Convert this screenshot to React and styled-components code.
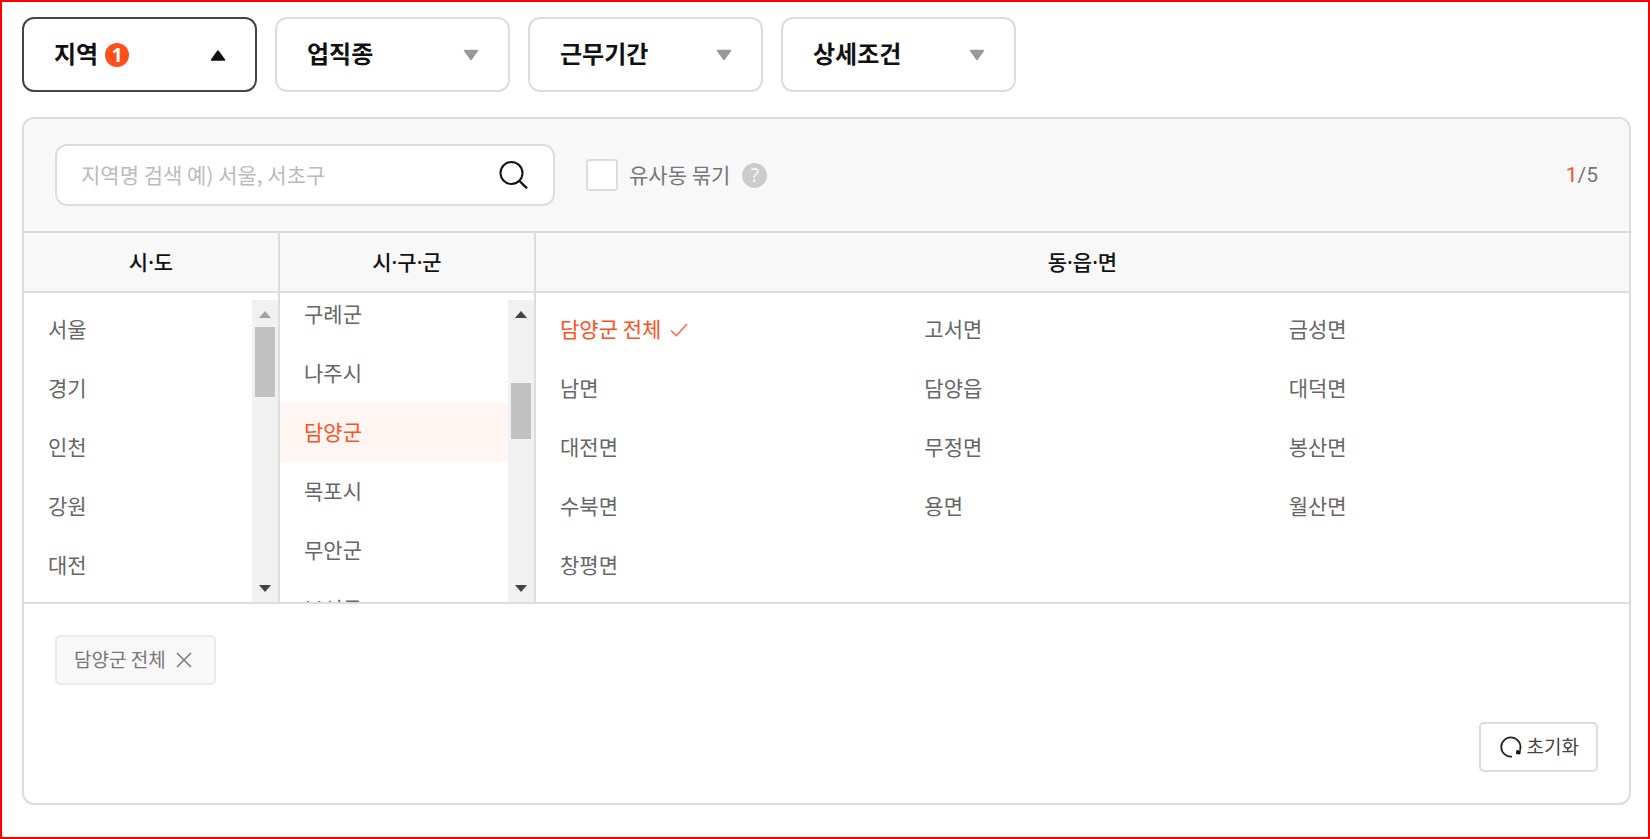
import React, { useState } from "react";
import styled, { createGlobalStyle, css } from "styled-components";

const filters = [
  { name: "지역", count: 1 },
  { name: "업직종" },
  { name: "근무기간" },
  { name: "상세조건" },
];

const cities = ["서울", "경기", "인천", "강원", "대전"];
const districts = ["구례군", "나주시", "담양군", "목포시", "무안군", "보성군"];
const towns = [
  "담양군 전체",
  "고서면",
  "금성면",
  "남면",
  "담양읍",
  "대덕면",
  "대전면",
  "무정면",
  "봉산면",
  "수북면",
  "용면",
  "월산면",
  "창평면",
];

const Caret = ({ up }) => (
  <svg width="16" height="12" viewBox="0 0 16 12" aria-hidden="true">
    <path
      d={up ? "M8 2 14.5 11H1.5Z" : "M8 10.5 1.5 1.5H14.5Z"}
      fill={up ? "#111" : "#999"}
      stroke={up ? "#111" : "#999"}
      strokeWidth="1.5"
      strokeLinejoin="round"
    />
  </svg>
);

const SearchIcon = () => (
  <svg width="29" height="29" viewBox="0 0 29 29" fill="none" aria-hidden="true">
    <circle cx="12.5" cy="12" r="11" stroke="#111" strokeWidth="2" />
    <path d="M20.5 20 28 27.3" stroke="#111" strokeWidth="2.4" />
  </svg>
);

const CheckIcon = () => (
  <svg width="18" height="14" viewBox="0 0 18 14" fill="none" aria-hidden="true">
    <path d="M1 7.5 6.5 12.5 17 1" stroke="#ff6a4d" strokeWidth="1.6" />
  </svg>
);

const CloseIcon = () => (
  <svg width="16" height="16" viewBox="0 0 16 16" aria-hidden="true">
    <path d="M1 1 15 15M15 1 1 15" stroke="#777" strokeWidth="1.5" />
  </svg>
);

const ResetIcon = () => (
  <svg width="22" height="22" viewBox="0 0 22 22" fill="none" aria-hidden="true">
    <path d="M12 20.6A9.6 9.6 0 1 1 20 14" stroke="#222" strokeWidth="1.8" />
    <path d="M16.4 14 21 14.6 20.2 18.6 16 18Z" fill="#111" />
  </svg>
);

const ScrollBar = ({ before, size, atTop }) => (
  <Track aria-hidden="true">
    <svg width="12" height="7" viewBox="0 0 12 7">
      <path d="M6 0 12 7H0Z" fill={atTop ? "#a3a3a3" : "#444"} />
    </svg>
    <Rail>
      <Thumb style={{ top: before, height: size }} />
    </Rail>
    <svg width="12" height="7" viewBox="0 0 12 7">
      <path d="M6 7 0 0H12Z" fill="#444" />
    </svg>
  </Track>
);

const App = () => {
  const [filter, setFilter] = useState("지역");
  const [city, setCity] = useState(null);
  const [district, setDistrict] = useState("담양군");
  const [selected, setSelected] = useState(["담양군 전체"]);

  const toggleTown = (town) => {
    if (selected.includes(town)) {
      setSelected(selected.filter((item) => item !== town));
    } else if (selected.length < 5) {
      setSelected([...selected, town]);
    }
  };

  return (
    <>
      <GlobalStyle />
      <Wrapper>
        <Filters>
          {filters.map(({ name, count }) => (
            <FilterButton
              key={name}
              type="button"
              $active={filter === name}
              onClick={() => setFilter(name)}
            >
              <FilterName>{name}</FilterName>
              {count && <Badge>{count}</Badge>}
              <Caret up={filter === name} />
            </FilterButton>
          ))}
        </Filters>

        <Panel>
          <Toolbar>
            <SearchBox>
              <input
                type="text"
                aria-label="지역명 검색"
                placeholder="지역명 검색 예) 서울, 서초구"
              />
              <button type="button" aria-label="검색">
                <SearchIcon />
              </button>
            </SearchBox>
            <CheckLabel>
              <input type="checkbox" />
              <span>유사동 묶기</span>
            </CheckLabel>
            <Help type="button">?</Help>
            <Counter>
              <em>{selected.length}</em>/5
            </Counter>
          </Toolbar>

          <Columns>
            <Column>
              <ColumnTitle>시·도</ColumnTitle>
              <ScrollArea>
                <List>
                  {cities.map((item) => (
                    <li key={item}>
                      <Item
                        type="button"
                        $active={city === item}
                        onClick={() => setCity(item)}
                      >
                        {item}
                      </Item>
                    </li>
                  ))}
                </List>
                <ScrollBar before={1} size={70} atTop />
              </ScrollArea>
            </Column>

            <Column>
              <ColumnTitle>시·구·군</ColumnTitle>
              <ScrollArea>
                <List $scrolled={15}>
                  {districts.map((item) => (
                    <li key={item}>
                      <Item
                        type="button"
                        $active={district === item}
                        $filled
                        onClick={() => setDistrict(item)}
                      >
                        {item}
                      </Item>
                    </li>
                  ))}
                </List>
                <ScrollBar before={57} size={56} />
              </ScrollArea>
            </Column>

            <Column>
              <ColumnTitle>동·읍·면</ColumnTitle>
              <TownGrid>
                {towns.map((item) => (
                  <li key={item}>
                    <Item
                      type="button"
                      $active={selected.includes(item)}
                      onClick={() => toggleTown(item)}
                    >
                      {item}
                      {selected.includes(item) && <CheckIcon />}
                    </Item>
                  </li>
                ))}
              </TownGrid>
            </Column>
          </Columns>

          <Footer>
            <Chips>
              {selected.map((item) => (
                <Chip key={item} type="button" onClick={() => toggleTown(item)}>
                  <span>{item}</span>
                  <CloseIcon />
                </Chip>
              ))}
            </Chips>
            <ResetButton type="button" onClick={() => setSelected([])}>
              <ResetIcon />
              <span>초기화</span>
            </ResetButton>
          </Footer>
        </Panel>
      </Wrapper>
    </>
  );
};

//styles
const GlobalStyle = createGlobalStyle`
  * {
    box-sizing: border-box;
    margin: 0;
    padding: 0;
  }

  body {
    background-color: #fff;
    color: #111;
    font-family: "Noto Sans CJK KR", sans-serif;
    font-size: 21px;
  }

  button,
  input {
    font: inherit;
    color: inherit;
  }

  button {
    border: none;
    background: none;
    cursor: pointer;
  }

  ul {
    list-style: none;
  }

  svg {
    display: block;
    flex-shrink: 0;
  }
`;

const Wrapper = styled.div`
  min-height: 100vh;
  padding: 15px 17px 28px 20px;
  border: 2px solid #f00;
`;

const Filters = styled.div`
  display: flex;
  gap: 18px;
  margin-bottom: 25px;
`;

const FilterButton = styled.button`
  display: flex;
  align-items: center;
  width: 235px;
  height: 75px;
  padding: 0 29px 0 30px;
  border: 2px solid ${({ $active }) => ($active ? "#444" : "#ddd")};
  border-radius: 12px;
  background-color: #fff;

  > svg {
    margin-left: auto;
  }
`;

const FilterName = styled.span`
  padding-bottom: 4px;
  font-size: 24px;
  font-weight: 700;
  line-height: 30px;
`;

const Badge = styled.span`
  width: 24px;
  height: 24px;
  margin-left: 7px;
  border-radius: 50%;
  background-color: #ff501b;
  color: #fff;
  font-family: "Noto Sans", sans-serif;
  font-size: 19px;
  font-weight: 700;
  line-height: 24px;
  text-align: center;
`;

const Panel = styled.section`
  border: 2px solid #ddd;
  border-radius: 12px;
  overflow: hidden;
`;

const Toolbar = styled.div`
  display: flex;
  align-items: center;
  height: 112px;
  padding: 0 31px;
  background-color: #f8f8f8;
`;

const SearchBox = styled.div`
  display: flex;
  align-items: center;
  width: 500px;
  height: 62px;
  padding: 0 25px 0 24px;
  border: 2px solid #ddd;
  border-radius: 12px;
  background-color: #fff;

  input {
    flex: 1;
    min-width: 0;
    padding-bottom: 2px;
    border: none;
    outline: none;
    background: none;

    &::placeholder {
      color: #bbb;
      opacity: 1;
    }
  }
`;

const CheckLabel = styled.label`
  display: flex;
  align-items: center;
  gap: 11px;
  margin-left: 31px;
  color: #777;

  span {
    padding-bottom: 2px;
  }

  input {
    appearance: none;
    width: 32px;
    height: 32px;
    border: 2px solid #ddd;
    border-radius: 3px;
    background-color: #fff;

    &:checked {
      background-color: #ff501b;
    }
  }
`;

const Help = styled.button`
  width: 25px;
  height: 25px;
  margin-left: 12px;
  border-radius: 50%;
  background-color: #ccc;
  color: #f8f8f8;
  font-family: "Noto Sans", sans-serif;
  font-size: 19px;
  line-height: 25px;
`;

const Counter = styled.p`
  margin-left: auto;
  color: #777;
  font-family: Roboto, sans-serif;
  font-size: 21px;

  em {
    color: #ff501b;
    font-style: normal;
  }
`;

const Columns = styled.div`
  display: grid;
  grid-template-columns: 254px 256px 1fr;
  border-top: 2px solid #ddd;
  border-bottom: 2px solid #ddd;
`;

const Column = styled.div`
  min-width: 0;

  & + & {
    border-left: 2px solid #ddd;
  }
`;

/* Noto Sans comes first for its narrow middle dot */
const ColumnTitle = styled.h2`
  height: 60px;
  border-bottom: 2px solid #ddd;
  background-color: #f8f8f8;
  font-family: "Noto Sans", "Noto Sans CJK KR", sans-serif;
  font-size: 21px;
  font-weight: 500;
  line-height: 58px;
  text-align: center;
`;

const ScrollArea = styled.div`
  display: flex;
  height: 302px;
  margin-top: 7px;
  overflow: hidden;
`;

const List = styled.ul`
  flex: 1;
  margin-top: -${({ $scrolled }) => $scrolled || 0}px;
`;

const Item = styled.button`
  display: flex;
  align-items: center;
  gap: 9px;
  width: 100%;
  height: 59px;
  padding: 0 24px 3px;
  color: #666;
  line-height: 30px;
  text-align: left;

  svg {
    margin-top: 3px;
  }

  ${({ $active }) =>
    $active &&
    css`
      color: #ff501b;
    `}

  ${({ $active, $filled }) =>
    $active &&
    $filled &&
    css`
      background-color: #fff6f4;
    `}
`;

const Track = styled.div`
  display: flex;
  flex-direction: column;
  align-items: center;
  width: 26px;
  padding: 11px 0 10px;
  background-color: #f1f1f1;
`;

const Rail = styled.div`
  position: relative;
  flex: 1;
  width: 20px;
  margin: 8px 0;
`;

const Thumb = styled.div`
  position: absolute;
  width: 100%;
  background-color: #c1c1c1;
`;

const TownGrid = styled.ul`
  display: grid;
  grid-template-columns: repeat(3, 1fr);
  padding-top: 7px;
`;

const Footer = styled.div`
  display: flex;
  flex-direction: column;
  padding: 31px;
`;

const Chips = styled.div`
  display: flex;
  flex-wrap: wrap;
  gap: 10px;
  min-height: 50px;
`;

const Chip = styled.button`
  display: flex;
  align-items: center;
  gap: 10px;
  height: 50px;
  padding: 0 22px 0 17px;
  border: 2px solid #eaeaea;
  border-radius: 5px;
  background-color: #f8f8f8;
  color: #777;
  font-size: 19px;

  span {
    padding-bottom: 4px;
  }
`;

const ResetButton = styled.button`
  display: flex;
  align-items: center;
  align-self: flex-end;
  gap: 5px;
  height: 50px;
  margin-top: 37px;
  padding: 0 17px 0 19px;
  border: 2px solid #ddd;
  border-radius: 5px;
  color: #444;
  font-size: 19px;

  span {
    padding-bottom: 4px;
  }
`;

export default App;
